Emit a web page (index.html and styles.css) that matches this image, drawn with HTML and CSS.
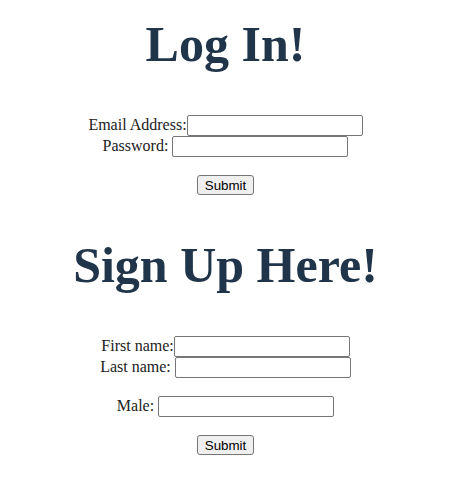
FILE: index.html
```html
<!DOCTYPE html>
<html>
<head>
<meta charset="utf-8">
<title>Log In</title>
<link rel="stylesheet" href="styles.css">
</head>
<body>
<div class="page">
  <h1 class="title">Log In!</h1>
  <form class="form">
    <div class="row"><label>Email Address:</label><input class="field" type="text"></div>
    <div class="row"><label>Password: </label><input class="field" type="password"></div>
    <div class="row row-gap"><input class="btn" type="submit" value="Submit"></div>
  </form>
  <h1 class="title title-next">Sign Up Here!</h1>
  <form class="form">
    <div class="row"><label>First name:</label><input class="field" type="text"></div>
    <div class="row"><label>Last name: </label><input class="field" type="text"></div>
    <div class="row row-gap"><label>Male: </label><input class="field" type="text"></div>
    <div class="row row-gap"><input class="btn" type="submit" value="Submit"></div>
  </form>
</div>
</body>
</html>
```
FILE: styles.css
```css
html, body {
  margin: 0;
  padding: 0;
  background: #ffffff;
}
.page {
  padding: 0 16px 8px 8px;
  text-align: center;
  font-family: "Liberation Serif", "Times New Roman", serif;
  font-size: 16px;
  color: #222222;
}
.title {
  font-family: "Liberation Serif", "Times New Roman", serif;
  font-size: 50px;
  font-weight: bold;
  color: #21354a;
  margin: 15px 0 42px;
  line-height: normal;
}
.title-next {
  margin-top: 41px;
}
.form {
  margin: 0;
}
.row {
  line-height: normal;
}
.row-gap {
  margin-top: 18px;
}
.field {
  box-sizing: border-box;
  width: 176px;
  height: 21px;
  margin: 0;
  padding: 1px 2px;
  border: 1px solid #767676;
  border-radius: 2px;
  background: #ffffff;
  font-family: "Liberation Sans", Arial, sans-serif;
  font-size: 13.333px;
  vertical-align: baseline;
}
.btn {
  box-sizing: border-box;
  height: 20px;
  margin: 0;
  padding: 1px 7px;
  border: 1px solid #767676;
  border-radius: 3px;
  background: #efefef;
  color: #000000;
  font-family: "Liberation Sans", Arial, sans-serif;
  font-size: 13.333px;
}
```
